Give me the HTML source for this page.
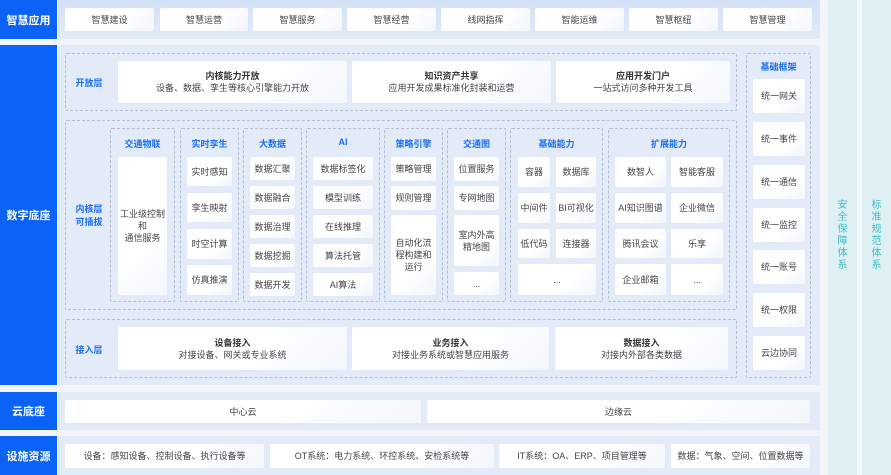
<!DOCTYPE html>
<html><head><meta charset="utf-8"><style>
*{margin:0;padding:0;box-sizing:border-box}
body{width:891px;height:475px;background:#f3f5fa;position:relative;overflow:hidden;font-family:"Liberation Sans","Noto Sans CJK SC",sans-serif;font-size:9px;color:#333}
div{position:absolute}
.lab{background:#0a63f6;color:#fff;font-size:11px;font-weight:bold;display:flex;align-items:center;justify-content:center;left:0;width:57px}
.pan{background:#e3ebf8;left:58px;width:762px}
.c{background:linear-gradient(135deg,#fff 60%,#f3f6fc);border-radius:2px;display:flex;align-items:center;justify-content:center;text-align:center;line-height:12px;color:#444;box-shadow:0 0 1px rgba(0,40,120,.06)}
.d{border:1px dashed #b4bdcc;border-radius:2px}
.t{color:#1a6ef5;font-weight:bold;font-size:9px;text-align:center}
.b{font-weight:bold;color:#333}
.side{background:#dff0f4;top:0;height:475px;width:29px}
.vt{color:#3dbccb;font-size:10px;line-height:12px;width:29px;text-align:center;top:200px;left:0}
</style></head><body>
<div class="lab" style="top:0;height:39px">智慧应用</div>
<div class="lab" style="top:45px;height:340px">数字底座</div>
<div class="lab" style="top:392px;height:38px">云底座</div>
<div class="lab" style="top:436px;height:39px">设施资源</div>

<div class="pan" style="top:0;height:39px;background:linear-gradient(#d3e1f8,#e2eaf8)"></div>
<div class="pan" style="top:45px;height:340px"></div>
<div class="pan" style="top:392px;height:38px"></div>
<div class="pan" style="top:436px;height:39px"></div>

<div class="side" style="left:828px"><div class="vt">安<br>全<br>保<br>障<br>体<br>系</div></div>
<div class="side" style="left:862px"><div class="vt">标<br>准<br>规<br>范<br>体<br>系</div></div>

<!-- row1 -->
<div class="c" style="left:65px;top:8px;width:89px;height:23px">智慧建设</div>
<div class="c" style="left:160px;top:8px;width:88px;height:23px">智慧运营</div>
<div class="c" style="left:253px;top:8px;width:89px;height:23px">智慧服务</div>
<div class="c" style="left:347px;top:8px;width:89px;height:23px">智慧经营</div>
<div class="c" style="left:441px;top:8px;width:89px;height:23px">线网指挥</div>
<div class="c" style="left:535px;top:8px;width:89px;height:23px">智能运维</div>
<div class="c" style="left:629px;top:8px;width:89px;height:23px">智慧枢纽</div>
<div class="c" style="left:723px;top:8px;width:89px;height:23px">智慧管理</div>

<!-- open layer -->
<div class="d" style="left:65px;top:53px;width:672px;height:58px"></div>
<div class="t" style="left:70px;top:76px;width:38px">开放层</div>
<div class="c" style="left:118px;top:61px;width:229px;height:42px"><span><span class="b">内核能力开放</span><br>设备、数据、孪生等核心引擎能力开放</span></div>
<div class="c" style="left:352px;top:61px;width:199px;height:42px"><span><span class="b">知识资产共享</span><br>应用开发成果标准化封装和运营</span></div>
<div class="c" style="left:556px;top:61px;width:174px;height:42px"><span><span class="b">应用开发门户</span><br>一站式访问多种开发工具</span></div>

<!-- kernel -->
<div class="d" style="left:65px;top:120px;width:672px;height:190px"></div>
<div class="t" style="left:70px;top:203px;width:38px;line-height:13px">内核层<br>可插拔</div>

<div class="d" style="left:110px;top:128px;width:65px;height:174px"></div>
<div class="t" style="left:110px;top:137px;width:65px">交通物联</div>
<div class="c" style="left:118px;top:157px;width:49px;height:138px">工业级控制<br>和<br>通信服务</div>

<div class="d" style="left:180px;top:128px;width:59px;height:174px"></div>
<div class="t" style="left:180px;top:137px;width:59px">实时孪生</div>
<div class="c" style="left:187px;top:157px;width:45px;height:29px">实时感知</div>
<div class="c" style="left:187px;top:193px;width:45px;height:29px">孪生映射</div>
<div class="c" style="left:187px;top:229px;width:45px;height:30px">时空计算</div>
<div class="c" style="left:187px;top:265px;width:45px;height:30px">仿真推演</div>

<div class="d" style="left:243px;top:128px;width:59px;height:174px"></div>
<div class="t" style="left:243px;top:137px;width:59px">大数据</div>
<div class="c" style="left:250px;top:157px;width:45px;height:23px">数据汇聚</div>
<div class="c" style="left:250px;top:186px;width:45px;height:23px">数据融合</div>
<div class="c" style="left:250px;top:215px;width:45px;height:23px">数据治理</div>
<div class="c" style="left:250px;top:244px;width:45px;height:23px">数据挖掘</div>
<div class="c" style="left:250px;top:273px;width:45px;height:23px">数据开发</div>

<div class="d" style="left:306px;top:128px;width:74px;height:174px"></div>
<div class="t" style="left:306px;top:137px;width:74px">AI</div>
<div class="c" style="left:313px;top:157px;width:60px;height:23px">数据标签化</div>
<div class="c" style="left:313px;top:186px;width:60px;height:23px">模型训练</div>
<div class="c" style="left:313px;top:215px;width:60px;height:23px">在线推理</div>
<div class="c" style="left:313px;top:244px;width:60px;height:23px">算法托管</div>
<div class="c" style="left:313px;top:273px;width:60px;height:23px">AI算法</div>

<div class="d" style="left:384px;top:128px;width:59px;height:174px"></div>
<div class="t" style="left:384px;top:137px;width:59px">策略引擎</div>
<div class="c" style="left:391px;top:157px;width:45px;height:24px">策略管理</div>
<div class="c" style="left:391px;top:186px;width:45px;height:24px">规则管理</div>
<div class="c" style="left:391px;top:215px;width:45px;height:80px">自动化流<br>程构建和<br>运行</div>

<div class="d" style="left:447px;top:128px;width:59px;height:174px"></div>
<div class="t" style="left:447px;top:137px;width:59px">交通图</div>
<div class="c" style="left:454px;top:157px;width:45px;height:24px">位置服务</div>
<div class="c" style="left:454px;top:186px;width:45px;height:24px">专网地图</div>
<div class="c" style="left:454px;top:215px;width:45px;height:51px">室内外高<br>精地图</div>
<div class="c" style="left:454px;top:272px;width:45px;height:23px">...</div>

<div class="d" style="left:510px;top:128px;width:93px;height:174px"></div>
<div class="t" style="left:510px;top:137px;width:93px">基础能力</div>
<div class="c" style="left:518px;top:157px;width:32px;height:30px">容器</div>
<div class="c" style="left:556px;top:157px;width:40px;height:30px">数据库</div>
<div class="c" style="left:518px;top:193px;width:32px;height:30px">中间件</div>
<div class="c" style="left:556px;top:193px;width:40px;height:30px">BI可视化</div>
<div class="c" style="left:518px;top:229px;width:32px;height:29px">低代码</div>
<div class="c" style="left:556px;top:229px;width:40px;height:29px">连接器</div>
<div class="c" style="left:518px;top:264px;width:78px;height:31px">...</div>

<div class="d" style="left:608px;top:128px;width:122px;height:174px"></div>
<div class="t" style="left:608px;top:137px;width:122px">扩展能力</div>
<div class="c" style="left:615px;top:157px;width:51px;height:30px">数智人</div>
<div class="c" style="left:671px;top:157px;width:52px;height:30px">智能客服</div>
<div class="c" style="left:615px;top:193px;width:51px;height:30px">AI知识图谱</div>
<div class="c" style="left:671px;top:193px;width:52px;height:30px">企业微信</div>
<div class="c" style="left:615px;top:229px;width:51px;height:29px">腾讯会议</div>
<div class="c" style="left:671px;top:229px;width:52px;height:29px">乐享</div>
<div class="c" style="left:615px;top:264px;width:51px;height:31px">企业邮箱</div>
<div class="c" style="left:671px;top:264px;width:52px;height:31px">...</div>

<!-- access -->
<div class="d" style="left:65px;top:319px;width:672px;height:59px"></div>
<div class="t" style="left:70px;top:343px;width:38px">接入层</div>
<div class="c" style="left:118px;top:327px;width:229px;height:43px"><span><span class="b">设备接入</span><br>对接设备、网关或专业系统</span></div>
<div class="c" style="left:352px;top:327px;width:197px;height:43px"><span><span class="b">业务接入</span><br>对接业务系统或智慧应用服务</span></div>
<div class="c" style="left:555px;top:327px;width:173px;height:43px"><span><span class="b">数据接入</span><br>对接内外部各类数据</span></div>

<!-- framework -->
<div class="d" style="left:746px;top:53px;width:65px;height:325px"></div>
<div class="t" style="left:746px;top:60px;width:65px">基础框架</div>
<div class="c" style="left:753px;top:79px;width:52px;height:34px">统一网关</div>
<div class="c" style="left:753px;top:122px;width:52px;height:34px">统一事件</div>
<div class="c" style="left:753px;top:165px;width:52px;height:34px">统一通信</div>
<div class="c" style="left:753px;top:208px;width:52px;height:34px">统一监控</div>
<div class="c" style="left:753px;top:250px;width:52px;height:34px">统一账号</div>
<div class="c" style="left:753px;top:293px;width:52px;height:34px">统一权限</div>
<div class="c" style="left:753px;top:336px;width:52px;height:34px">云边协同</div>

<!-- cloud -->
<div class="c" style="left:65px;top:400px;width:356px;height:23px">中心云</div>
<div class="c" style="left:427px;top:400px;width:383px;height:23px">边缘云</div>

<!-- infra -->
<div class="c" style="left:65px;top:444px;width:199px;height:24px">设备：感知设备、控制设备、执行设备等</div>
<div class="c" style="left:270px;top:444px;width:224px;height:24px">OT系统：电力系统、环控系统、安检系统等</div>
<div class="c" style="left:499px;top:444px;width:166px;height:24px">IT系统：OA、ERP、项目管理等</div>
<div class="c" style="left:671px;top:444px;width:139px;height:24px">数据：气象、空间、位置数据等</div>
</body></html>
